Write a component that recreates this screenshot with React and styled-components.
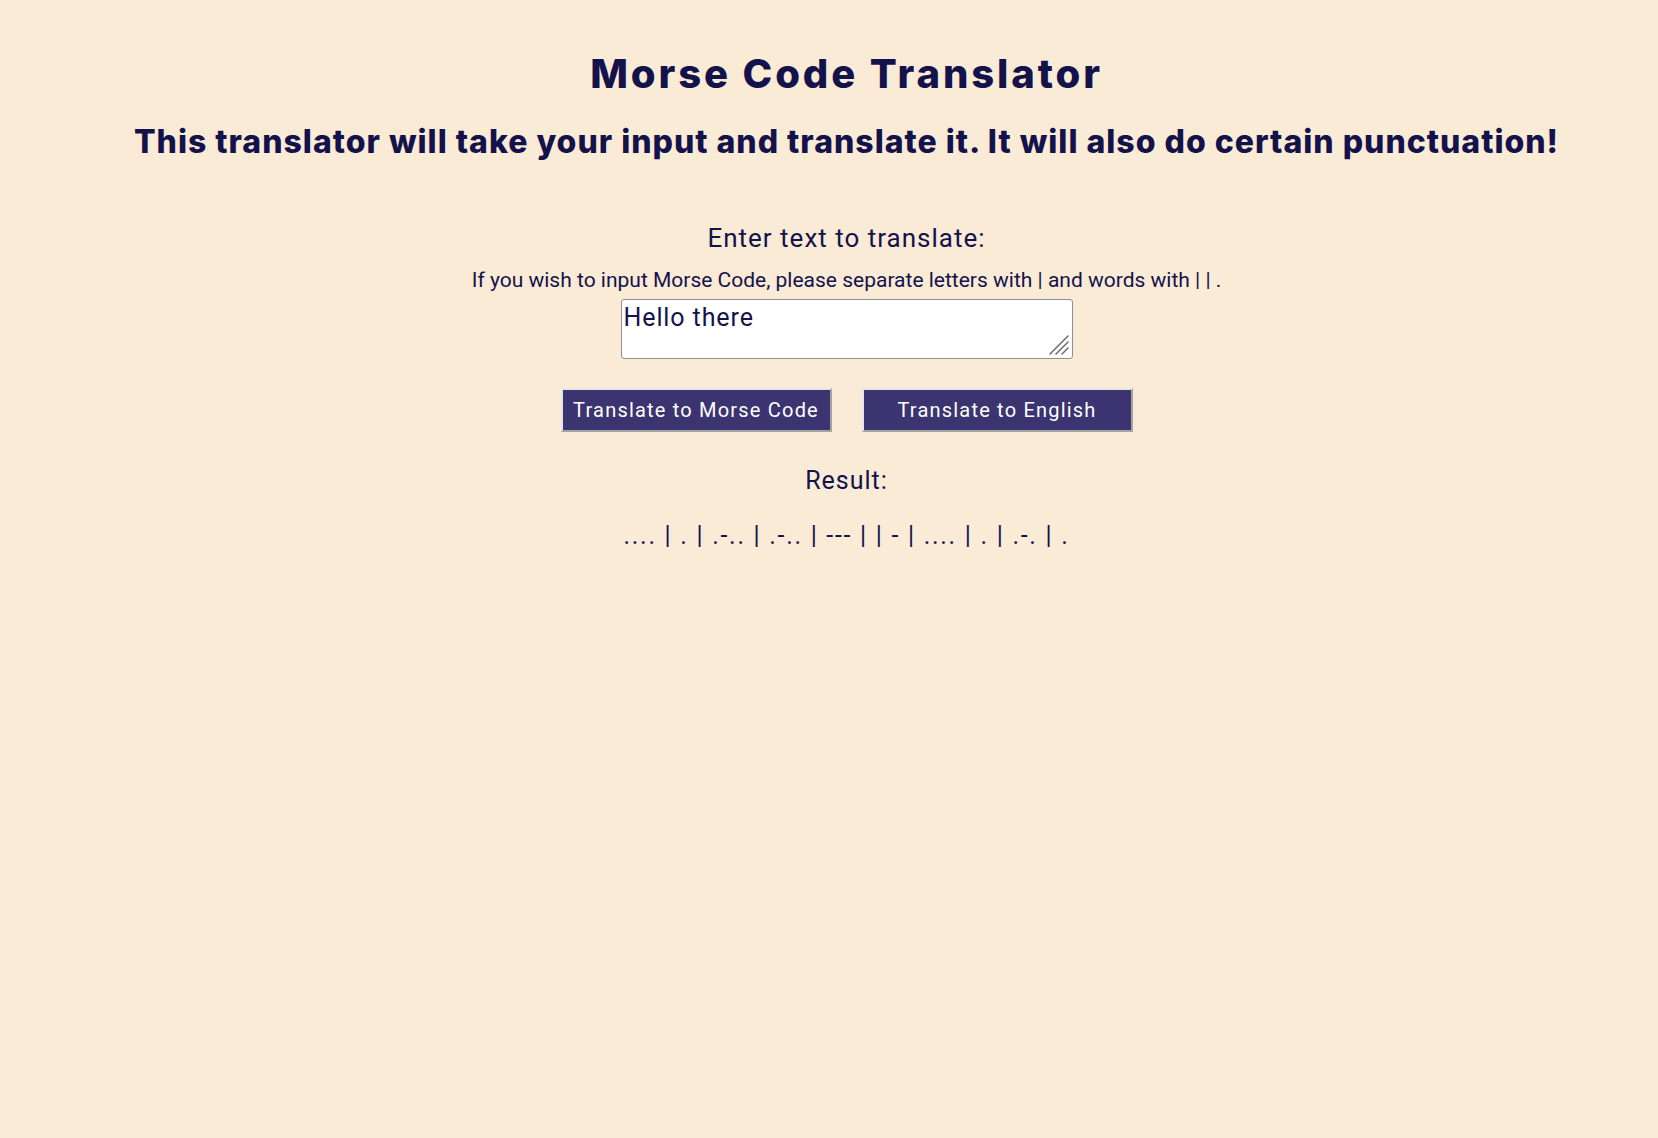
import React from "react";
import styled, { createGlobalStyle } from "styled-components";

const Global = createGlobalStyle`
  html, body { margin: 0; padding: 0; background: #faebd7; }
  body { font-family: Roboto, "Liberation Sans", sans-serif; color: #14124b; }
`;

const Page = styled.main`
  min-height: 1138px;
  box-sizing: border-box;
  padding: 50px 0 0 35px;
  display: flex;
  flex-direction: column;
  align-items: center;
  text-align: center;
`;

const Title = styled.h1`
  margin: 0;
  font-family: Inter, "Noto Sans", sans-serif;
  font-weight: 800;
  font-size: 40px;
  line-height: 48px;
  letter-spacing: 2.9px;
`;

const Subtitle = styled.h2`
  margin: 24px 0 0;
  font-family: Inter, "Noto Sans", sans-serif;
  font-weight: 800;
  font-size: 32px;
  line-height: 40px;
  letter-spacing: 1px;
`;

const Label = styled.label`
  margin-top: 60px;
  font-size: 26px;
  line-height: 32px;
  letter-spacing: 1px;
`;

const Hint = styled.p`
  margin: 14px 0 0;
  font-size: 21px;
  line-height: 24px;
`;

const BoxWrap = styled.div`
  position: relative;
  margin-top: 7px;
  width: 452px;
  height: 60px;
`;

const TextBox = styled.textarea`
  display: block;
  box-sizing: border-box;
  width: 100%;
  height: 100%;
  padding: 3px 2px 1px;
  margin: 0;
  border: 1px solid #8f8f8f;
  border-radius: 3px;
  background: #fff;
  color: #14124b;
  font-family: Roboto, "Liberation Sans", sans-serif;
  font-size: 25px;
  line-height: 30px;
  letter-spacing: 0.9px;
  outline: none;
  resize: none;
`;

const Grip = styled.svg`
  position: absolute;
  right: 3px;
  bottom: 3px;
  width: 22px;
  height: 22px;
  pointer-events: none;
`;

const ButtonRow = styled.div`
  margin-top: 29px;
  display: flex;
  gap: 30px;
`;

const Button = styled.button`
  box-sizing: border-box;
  width: 271px;
  height: 44px;
  background: #3c3471;
  color: #fff;
  border: 2px solid;
  border-top-color: #e6e6e6;
  border-left-color: #e6e6e6;
  border-right-color: #a3a3a3;
  border-bottom-color: #a3a3a3;
  font-family: Roboto, "Liberation Sans", sans-serif;
  font-size: 20px;
  letter-spacing: 1.2px;
  padding: 0;
  cursor: pointer;
`;

const ResultLabel = styled.div`
  margin-top: 34px;
  font-size: 25px;
  line-height: 30px;
  letter-spacing: 1px;
`;

const Morse = styled.div`
  margin-top: 25px;
  font-size: 25px;
  line-height: 30px;
  letter-spacing: 1.7px;
  white-space: pre;
`;

export default function App() {
  return (
    <>
      <Global />
      <Page>
        <Title>Morse Code Translator</Title>
        <Subtitle>
          This translator will take your input and translate it. It will also do certain punctuation!
        </Subtitle>
        <Label htmlFor="input">Enter text to translate:</Label>
        <Hint>If you wish to input Morse Code, please separate letters with | and words with | | .</Hint>
        <BoxWrap>
          <TextBox id="input" defaultValue="Hello there" />
          <Grip viewBox="0 0 22 22">
            <g stroke="#6f6f6f" strokeWidth="1.6" strokeLinecap="round">
              <line x1="2" y1="20" x2="20" y2="2" />
              <line x1="8" y1="20" x2="20" y2="8" />
              <line x1="14" y1="20" x2="20" y2="14" />
            </g>
          </Grip>
        </BoxWrap>
        <ButtonRow>
          <Button>Translate to Morse Code</Button>
          <Button>Translate to English</Button>
        </ButtonRow>
        <ResultLabel>Result:</ResultLabel>
        <Morse>.... | . | .-.. | .-.. | --- | | - | .... | . | .-. | .</Morse>
      </Page>
    </>
  );
}
